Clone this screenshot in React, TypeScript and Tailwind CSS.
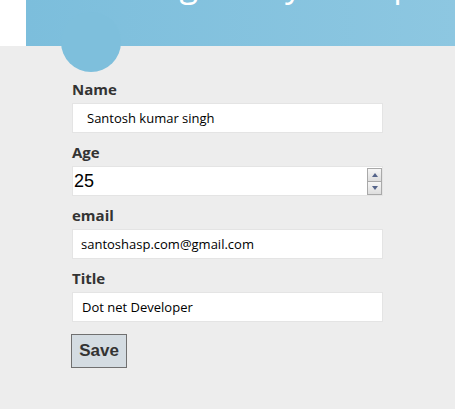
import type { ReactNode } from 'react';

const SANS = "font-['Open_Sans',sans-serif]";

function Field({ label, children }: { label: string; children: ReactNode }) {
  return (
    <div className="mb-[9px]">
      <label className="mb-1 block text-[15px] font-bold leading-5 text-[#333]">{label}</label>
      {children}
    </div>
  );
}

function Spinner() {
  return (
    <div className="absolute right-[1px] top-[2px] flex h-[27px] w-[15px] flex-col">
      <div className="flex h-1/2 items-center justify-center border border-[#a9a9a9] bg-linear-to-b from-[#f6f6f6] to-[#dedede]">
        <svg width="6" height="4" viewBox="0 0 6 4">
          <path d="M3 0 L6 4 L0 4 Z" fill="#55648a" />
        </svg>
      </div>
      <div className="flex h-1/2 items-center justify-center border border-t-0 border-[#a9a9a9] bg-linear-to-b from-[#f6f6f6] to-[#dedede]">
        <svg width="6" height="4" viewBox="0 0 6 4">
          <path d="M0 0 L6 0 L3 4 Z" fill="#55648a" />
        </svg>
      </div>
    </div>
  );
}

export default function App() {
  const box = 'block h-[30px] w-full border border-[#e4e4e4] bg-white text-black outline-none';
  return (
    <div className={`relative min-h-screen bg-[#ededed] ${SANS}`}>
      <div className="flex h-[46px] bg-white pl-[26px]">
        <div className="flex-1 overflow-hidden bg-linear-to-r from-[#7cbedc] to-[#8dc7e1]">
          {/* heading scrolled mostly out of view, only descenders show */}
          <h1 className="-mt-[33px] flex text-[34px] font-normal leading-[34px] text-white">
            <span className="w-[172px] shrink-0 text-right">Sharing</span>
            <span className="w-[104px] shrink-0 text-right">Entry</span>
            <span className="w-[112px] shrink-0 text-right">Setup</span>
          </h1>
        </div>
      </div>
      <div className="absolute left-[61px] top-[12px] h-[60px] w-[60px] rounded-full bg-[#7ebfdc]" />

      <form className="ml-[72px] mt-[33px] w-[311px]">
        <Field label="Name">
          <input className={`${box} pl-[14px] text-[13px]`} defaultValue="Santosh kumar singh" />
        </Field>
        <Field label="Age">
          <div className="relative">
            <input
              className={`${box} pl-[1px] font-['Liberation_Sans',Arial,sans-serif] text-[18px] text-[#333]`}
              defaultValue="25"
            />
            <Spinner />
          </div>
        </Field>
        <Field label="email">
          <input className={`${box} pl-[8px] text-[13px]`} defaultValue="santoshasp.com@gmail.com" />
        </Field>
        <Field label="Title">
          <input className={`${box} pl-[9px] text-[13px]`} defaultValue="Dot net Developer" />
        </Field>
        <button
          type="button"
          className="-ml-px mt-[3px] h-[34px] w-[56px] border border-[#707070] bg-[#d4dce2] font-['Liberation_Sans',Arial,sans-serif] text-[17px] font-bold text-[#333]"
        >
          Save
        </button>
      </form>
    </div>
  );
}
